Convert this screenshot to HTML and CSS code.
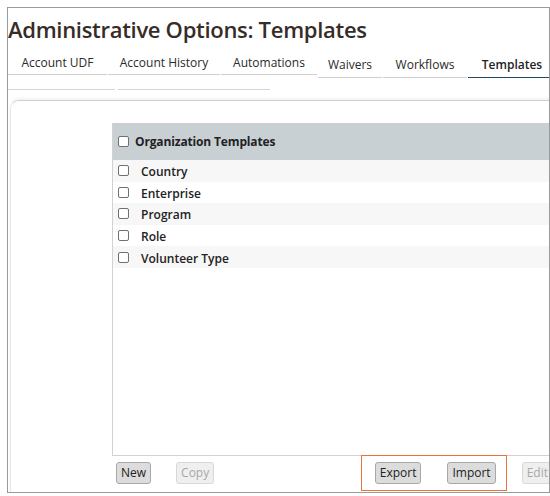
FILE: index.html
```html
<!DOCTYPE html>
<html>
<head>
<meta charset="utf-8">
<link rel="stylesheet" href="styles.css">
</head>
<body>
<div class="frame">
  <h1 class="title">Administrative Options: Templates</h1>
  <div class="tabs">
    <div class="tab-row">
      <div class="tab t1">Account UDF</div>
      <div class="tab t2">Account History</div>
      <div class="tab t3">Automations</div>
      <div class="tab low t4">Waivers</div>
      <div class="tab low t5">Workflows</div>
      <div class="tab low active t6">Templates</div>
    </div>
    <div class="tab-row2">
      <span class="seg s1"></span>
      <span class="seg s2"></span>
    </div>
  </div>
  <div class="panel">
    <div class="content">
      <div class="table">
        <div class="thead">
          <span class="cb"></span>
          <span class="th-label">Organization Templates</span>
        </div>
        <div class="row alt"><span class="cb"></span><span class="label">Country</span></div>
        <div class="row"><span class="cb"></span><span class="label">Enterprise</span></div>
        <div class="row alt"><span class="cb"></span><span class="label">Program</span></div>
        <div class="row"><span class="cb"></span><span class="label">Role</span></div>
        <div class="row alt"><span class="cb"></span><span class="label">Volunteer Type</span></div>
      </div>
      <div class="buttons">
        <button class="btn b-new">New</button>
        <button class="btn disabled b-copy">Copy</button>
        <div class="highlight">
          <button class="btn">Export</button>
          <button class="btn">Import</button>
        </div>
        <button class="btn disabled b-edit">Edit</button>
      </div>
    </div>
  </div>
</div>
</body>
</html>
```
FILE: styles.css
```css
* { box-sizing: border-box; }
html, body { margin: 0; padding: 0; background: #fff; }
body {
  font-family: "Open Sans", "Liberation Sans", sans-serif;
  color: #222;
}
.frame {
  margin: 7px 0 0 7px;
  width: 543px;
  height: 486px;
  border: 1px solid #9a9a9a;
  overflow: hidden;
  position: relative;
}
.title {
  margin: 0;
  padding: 6px 0 0 0;
  font-size: 22px;
  font-weight: 600;
  letter-spacing: -0.3px;
  color: #362c28;
  line-height: 30px;
  height: 44px;
  white-space: nowrap;
}
.tab-row {
  display: flex;
  align-items: flex-start;
  height: 26px;
}
.tab {
  flex: none;
  font-size: 12px;
  line-height: 22px;
  text-align: center;
  border-bottom: 1px solid #cfcfcf;
  height: 23px;
  margin-right: 1px;
  white-space: nowrap;
  color: #2a2a2a;
}
.tab.low { padding-top: 2px; height: 26px; }
.t1 { width: 99px; }
.t2 { width: 112px; }
.t3 { width: 96px; }
.t4 { width: 64px; }
.t5 { width: 84px; }
.t6 { width: 88px; margin-right: 0; }
.tab.active {
  font-weight: 600;
  border-bottom: 1.5px solid #1f4a6b;
  color: #222;
}
.tab-row2 {
  display: flex;
  height: 12px;
  align-items: flex-end;
}
.seg { display: block; height: 1px; background: #d4d4d4; }
.s1 { width: 107px; margin-right: 3px; }
.s2 { width: 152px; }
.panel {
  margin-top: 10px;
  margin-left: 2px;
  width: 700px;
  height: 420px;
  border-top: 1px solid #cfcfcf;
  border-left: 1px solid #e6e6e6;
  border-top-left-radius: 9px;
  box-shadow: 0 -2px 3px rgba(0,0,0,0.05);
  padding: 22px 0 0 101px;
}
.content { width: 600px; }
.table {
  height: 333px;
  border-left: 1px solid #d2d2d2;
  border-bottom: 1px solid #d2d2d2;
}
.thead {
  height: 37px;
  background: #c9d0d4;
  display: flex;
  align-items: center;
  padding-left: 5px;
}
.th-label {
  font-size: 12px;
  font-weight: 700;
  letter-spacing: -0.15px;
  margin-left: 6px;
  color: #222;
}
.row {
  height: 21.6px;
  display: flex;
  align-items: center;
  padding-left: 5px;
}
.row.alt { background: #f7f7f7; }
.label {
  font-size: 12px;
  font-weight: 600;
  margin-left: 12px;
  color: #222;
  position: relative;
  top: 1px;
}
.cb {
  display: inline-block;
  width: 11px;
  height: 11px;
  border: 1px solid #707070;
  border-radius: 2px;
  background: #fff;
  flex: none;
}
.buttons {
  display: flex;
  align-items: center;
  height: 34px;
  padding-left: 4px;
}
.btn {
  flex: none;
  font-family: "Open Sans", "Liberation Sans", sans-serif;
  font-size: 12px;
  height: 22px;
  padding: 0 4px;
  background: #dcdcdc;
  border: 1px solid #a8a8a8;
  border-radius: 3px;
  color: #222;
  line-height: 20px;
}
.btn.disabled {
  background: #efefef;
  border-color: #d8d8d8;
  color: #a8a8a8;
}
.b-copy { margin-left: 25px; }
.highlight {
  flex: none;
  margin-left: 147px;
  display: flex;
  align-items: center;
  gap: 26px;
  height: 36px;
  padding: 0 10px 0 12.5px;
  border: 1.5px solid #e8743b;
}
.b-edit { margin-left: 15px; }
```
